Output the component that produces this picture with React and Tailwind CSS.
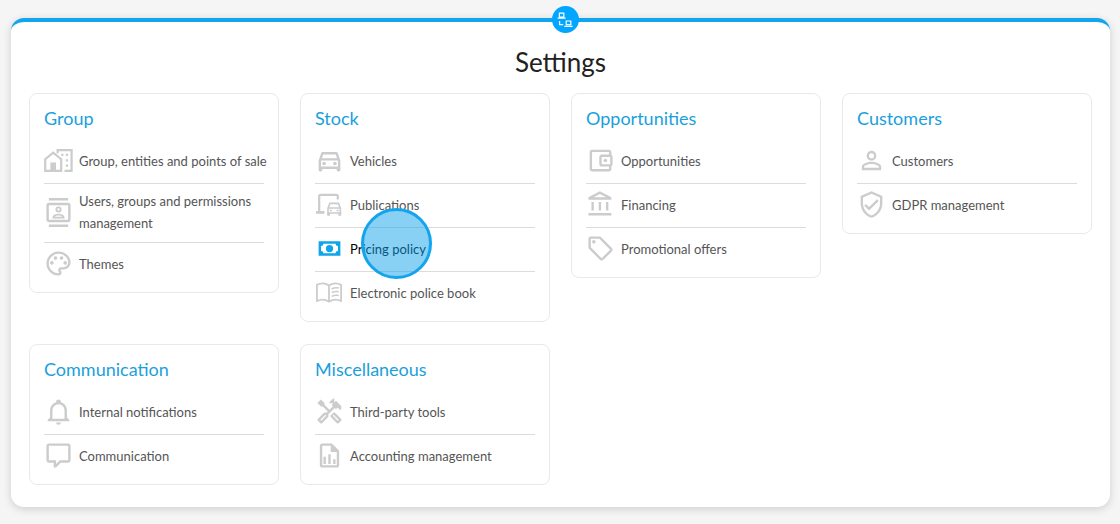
import {
  MdOutlineContacts,
  MdOutlinePalette,
  MdOutlineDirectionsCar,
  MdOutlineAccountBalanceWallet,
  MdOutlineAccountBalance,
  MdPersonOutline,
  MdOutlineHandyman,
} from "react-icons/md";

function Glyph({ d, className }) {
  return (
    <svg viewBox="0 0 24 24" fill="currentColor" className={className} aria-hidden="true">
      <path d={d} />
    </svg>
  );
}

const TagIcon = (p) => (
  <Glyph {...p} d="M21.41 11.58L12.41 2.58A2 2 0 0 0 11 2H4A2 2 0 0 0 2 4V11A2 2 0 0 0 2.59 12.42L11.59 21.42A2 2 0 0 0 13 22A2 2 0 0 0 14.41 21.41L21.41 14.41A2 2 0 0 0 22 13A2 2 0 0 0 21.41 11.58M13 20L4 11V4H11L20 13M6.5 5A1.5 1.5 0 1 1 5 6.5A1.5 1.5 0 0 1 6.5 5Z" />
);
const ShieldIcon = (p) => (
  <Glyph {...p} d="M21,11C21,16.55 17.16,21.74 12,23C6.84,21.74 3,16.55 3,11V5L12,1L21,5V11M12,21C15.75,20 19,15.54 19,11.22V6.3L12,3.18L5,6.3V11.22C5,15.54 8.25,20 12,21M10,17L6,13L7.41,11.59L10,14.17L16.59,7.58L18,9" />
);
const BellIcon = (p) => (
  <Glyph {...p} d="M10,21H14A2,2 0 0,1 12,23A2,2 0 0,1 10,21M21,19V20H3V19L5,17V11C5,7.9 7.03,5.17 10,4.29C10,4.19 10,4.1 10,4A2,2 0 0,1 12,2A2,2 0 0,1 14,4C14,4.1 14,4.19 14,4.29C16.97,5.17 19,7.9 19,11V17L21,19M17,11A5,5 0 0,0 12,6A5,5 0 0,0 7,11V18H17V11Z" />
);
const MessageIcon = (p) => (
  <Glyph {...p} d="M9,22A1,1 0 0,1 8,21V18H4A2,2 0 0,1 2,16V4C2,2.89 2.9,2 4,2H20A2,2 0 0,1 22,4V16A2,2 0 0,1 20,18H13.9L10.2,21.71C10,21.9 9.75,22 9.5,22V22H9M10,16V19.08L13.08,16H20V4H4V16H10Z" />
);
const CashIcon = (p) => (
  <Glyph {...p} d="M3,6H21V18H3V6M12,9A3,3 0 0,1 15,12A3,3 0 0,1 12,15A3,3 0 0,1 9,12A3,3 0 0,1 12,9M7,8A2,2 0 0,1 5,10V14A2,2 0 0,1 7,16H17A2,2 0 0,1 19,14V10A2,2 0 0,1 17,8H7Z" />
);
const FileChartIcon = (p) => (
  <Glyph {...p} d="M9 13V19H7V13H9M15 15V19H17V15H15M11 11V19H13V11H11M14 2H6C4.9 2 4 2.9 4 4V20C4 21.1 4.9 22 6 22H18C19.1 22 20 21.1 20 20V8L14 2M18 20H6V4H13V9H18V20Z" />
);

function HomeCityIcon({ className }) {
  return (
    <svg viewBox="0 0 29 29" fill="none" stroke="currentColor" strokeWidth="2.2" className={className} aria-hidden="true">
      <path d="M1.2 24.8V13.2L9.2 6.6L17.2 13.2V24.8Z" />
      <path d="M12.5 4.2H27.6V24.8H20.5M13.6 4V7.2" />
      <path fill="currentColor" stroke="none" d="M6.4 16.5H12V25H6.4ZM17.2 7.8H19.4V10H17.2ZM21.8 7.8H24V10H21.8ZM21.8 13.2H24V15.4H21.8ZM21.8 18.6H24V20.8H21.8Z" />
    </svg>
  );
}

function ScreenCarIcon({ className }) {
  return (
    <svg viewBox="0 0 29 29" fill="none" stroke="currentColor" className={className} aria-hidden="true">
      <path strokeWidth="2.2" d="M4.2 22V6.3A1.5 1.5 0 0 1 5.7 4.8H21.3A1.5 1.5 0 0 1 22.8 6.3V9.5" />
      <path strokeWidth="2.8" d="M1 22.4H9.4" />
      <path strokeWidth="1.6" d="M13 18.4L14.9 13.4H23.5L25.4 18.4V23H13Z M13 18H25.4" />
      <path fill="currentColor" stroke="none" d="M12.2 22.5H15V25.8H12.2ZM23.4 22.5H26.2V25.8H23.4Z" />
      <circle cx="15.8" cy="20.5" r="1.1" fill="currentColor" stroke="none" />
      <circle cx="22.6" cy="20.5" r="1.1" fill="currentColor" stroke="none" />
    </svg>
  );
}

function BookIcon({ className }) {
  return (
    <svg viewBox="0 0 29 29" fill="none" stroke="currentColor" strokeLinejoin="round" className={className} aria-hidden="true">
      <path strokeWidth="1.8" d="M14 7.4C10.2 4.9 5.6 4.9 1.9 6.9V23.1C5.6 21.2 10.2 21.2 14 23.7C17.8 21.2 22.4 21.2 26.1 23.1V6.9C22.4 4.9 17.8 4.9 14 7.4ZM14 7.4V23.7" />
      <path strokeWidth="1.5" d="M16.6 11C18.8 9.8 21.2 9.5 23.8 10M16.6 14.7C18.8 13.5 21.2 13.2 23.8 13.7M16.6 18.4C18.8 17.2 21.2 16.9 23.8 17.4" />
    </svg>
  );
}

function LinkedComputersIcon({ className }) {
  return (
    <svg viewBox="0 0 16 16" fill="none" stroke="currentColor" strokeWidth="1.2" className={className} aria-hidden="true">
      <path d="M2.4 1.2H6.8V5H2.4ZM0.6 6.2H8.6M9.2 9H13.8V12.6H9.2ZM7.4 14.4H15.6M2.6 9V12.6H6.2" />
    </svg>
  );
}

const sections = [
  {
    title: "Group",
    items: [
      { label: "Group, entities and points of sale", icon: HomeCityIcon },
      { label: "Users, groups and permissions management", icon: MdOutlineContacts },
      { label: "Themes", icon: MdOutlinePalette },
    ],
  },
  {
    title: "Stock",
    items: [
      { label: "Vehicles", icon: MdOutlineDirectionsCar },
      { label: "Publications", icon: ScreenCarIcon },
      { label: "Pricing policy", icon: CashIcon, active: true },
      { label: "Electronic police book", icon: BookIcon },
    ],
  },
  {
    title: "Opportunities",
    items: [
      { label: "Opportunities", icon: MdOutlineAccountBalanceWallet },
      { label: "Financing", icon: MdOutlineAccountBalance },
      { label: "Promotional offers", icon: TagIcon },
    ],
  },
  {
    title: "Customers",
    items: [
      { label: "Customers", icon: MdPersonOutline },
      { label: "GDPR management", icon: ShieldIcon },
    ],
  },
  {
    title: "Communication",
    items: [
      { label: "Internal notifications", icon: BellIcon },
      { label: "Communication", icon: MessageIcon },
    ],
  },
  {
    title: "Miscellaneous",
    items: [
      { label: "Third-party tools", icon: MdOutlineHandyman },
      { label: "Accounting management", icon: FileChartIcon },
    ],
  },
];

function Item({ label, icon: Icon, active }) {
  return (
    <li className="border-b border-[#dcdcdc] last:border-b-0">
      <a
        href="#"
        className={
          active
            ? "relative flex min-h-[43px] items-center gap-[6px] pt-[6px] pb-[8px] text-black"
            : "flex min-h-[43px] items-center gap-[6px] pt-[6px] pb-[8px] text-[#555]"
        }
      >
        <Icon className={active ? "size-[29px] shrink-0 text-[#0ea5e9]" : "size-[29px] shrink-0 text-[#ccc]"} />
        <span className="-mr-2">{label}</span>
        {active && (
          <span className="pointer-events-none absolute top-1/2 left-[46px] -mt-[42px] size-[71px] rounded-full border-[3px] border-[#12a4ec] bg-[#12a4ec]/50" />
        )}
      </a>
    </li>
  );
}

function Card({ title, items }) {
  return (
    <section className="rounded-[8px] border border-[#e9e9e9] px-[14px] pb-[6px]">
      <h2 className="pt-[12px] pb-[10px] text-[18px] leading-[24px] text-[#1b9fdc]">{title}</h2>
      <ul>
        {items.map((item) => (
          <Item key={item.label} {...item} />
        ))}
      </ul>
    </section>
  );
}

export default function App() {
  return (
    <div className="min-h-screen bg-[#f5f5f5] pt-[18px] pr-[10px] pb-[17px] pl-[11px] font-['Lato','Carlito',sans-serif] text-[13px] leading-[22px]">
      <main className="relative rounded-[13px] border-t-4 border-[#12a4ec] bg-white px-[18px] pb-[22px] shadow-[0_2px_8px_rgba(0,0,0,0.16)]">
        <div className="absolute -top-[16px] left-1/2 -ml-[9px] flex size-[27px] items-center justify-center rounded-full bg-[#00a6ff] text-white">
          <LinkedComputersIcon className="size-[16px]" />
        </div>
        <h1 className="pt-[24px] pb-[15px] text-center text-[26px] leading-[32px] text-[#212121]">Settings</h1>
        <div className="grid grid-cols-1 items-start gap-x-[21px] gap-y-[22px] sm:grid-cols-2 lg:grid-cols-4">
          {sections.map((section) => (
            <Card key={section.title} {...section} />
          ))}
        </div>
      </main>
    </div>
  );
}
